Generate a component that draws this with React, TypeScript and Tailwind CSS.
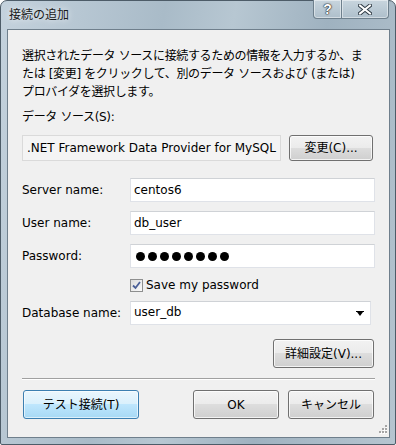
const font = "font-['DejaVu_Sans','Noto_Sans_CJK_JP',sans-serif]";

const btn =
  'flex items-center justify-center rounded-[3px] border border-[#707070] bg-[linear-gradient(#f2f2f2_0%,#ebebeb_50%,#dddddd_50%,#cfcfcf_100%)] shadow-[inset_0_0_0_1px_rgba(255,255,255,0.75)] text-[12px] text-black';

const btnDefault =
  'flex items-center justify-center rounded-[3px] border border-[#3c7fb1] bg-[linear-gradient(#eaf6fd_0%,#d9f0fc_50%,#bee6fd_50%,#a7d9f5_100%)] shadow-[inset_0_0_0_1px_rgba(255,255,255,0.6)] text-[12px] text-black';

const input =
  'flex-1 h-[24px] bg-white border border-[#dfe2e8] border-t-[#cfd2d6] flex items-center pl-[3px] text-[12px]';

function Row({ label, children }: { label: string; children: React.ReactNode }) {
  return (
    <div className="flex items-center">
      <div className="w-[108px] text-[12px] leading-[18px]">{label}</div>
      {children}
    </div>
  );
}

function Grip() {
  return (
    <svg width="10" height="10" viewBox="0 0 10 10" className="absolute right-[2px] bottom-[2px]">
      {[
        [8, 0],
        [8, 3],
        [5, 3],
        [8, 6],
        [5, 6],
        [2, 6],
      ].map(([x, y]) => (
        <g key={`${x}-${y}`}>
          <rect x={x + 1} y={y + 1} width="2" height="2" fill="#ffffff" />
          <rect x={x} y={y} width="2" height="2" fill="#a6a6a6" />
        </g>
      ))}
    </svg>
  );
}

export default function App() {
  return (
    <div className={`${font} w-[396px] h-[445px] flex flex-col rounded-t-[7px] rounded-b-[2px] border border-[#4d5c68] bg-[linear-gradient(100deg,#c4d2dd_0%,#a9bbc8_35%,#b7c7d2_50%,#9fb2c0_70%,#b6c5d0_100%)] text-black`}>
      {/* Title bar */}
      <div className="h-[28px] flex items-start justify-between">
        <div className="pl-[8px] pt-[5px] text-[12px] leading-[18px] text-[#1a1a1a] [text-shadow:0_0_6px_rgba(255,255,255,0.9)]">
          接続の追加
        </div>
        <div className="flex mr-[6px] -mt-px">
          <div className="w-[29px] h-[19px] flex items-center justify-center rounded-bl-[4px] border border-t-0 border-[#6e808d] bg-[linear-gradient(#c8d5de,#aebfcb)] shadow-[inset_0_0_0_1px_rgba(255,255,255,0.45)]">
            <span className="font-['Liberation_Sans',sans-serif] font-bold text-[14px] leading-none text-white [text-shadow:0_0_1px_#222,0_0_1px_#222,0_0_2px_#333]">
              ?
            </span>
          </div>
          <div className="w-[47px] h-[19px] flex items-center justify-center rounded-br-[4px] border border-t-0 border-l-0 border-[#6e808d] bg-[linear-gradient(#c8d5de,#aebfcb)] shadow-[inset_0_0_0_1px_rgba(255,255,255,0.45)]">
            <svg width="14" height="11" viewBox="0 0 14 11">
              <path d="M2 1.5 L12 9.5 M12 1.5 L2 9.5" stroke="#2e3a44" strokeWidth="4" strokeLinecap="square" />
              <path d="M2 1.5 L12 9.5 M12 1.5 L2 9.5" stroke="#ffffff" strokeWidth="2" strokeLinecap="square" />
            </svg>
          </div>
        </div>
      </div>

      {/* Client area */}
      <div className="relative flex-1 ml-[6px] mr-[5px] mb-[6px] border border-[#6f7f8c] bg-[#f0f0f0] px-[14px] pt-[17px] flex flex-col">
        <p className="text-[12px] leading-[18px] whitespace-nowrap tracking-[-0.35px]">
          選択されたデータ ソースに接続するための情報を入力するか、ま
          <br />
          たは [変更] をクリックして、別のデータ ソースおよび (または)
          <br />
          プロバイダを選択します。
        </p>

        <div className="mt-[7px] text-[12px] leading-[18px] tracking-[-0.35px]">データ ソース(S):</div>

        <div className="mt-[9px] flex items-center gap-[8px]">
          <div className="w-[259px] h-[26px] overflow-hidden whitespace-nowrap flex items-center pl-[4px] bg-[#f4f4f4] border border-[#dadada] text-[12px]">
            .NET Framework Data Provider for MySQL
          </div>
          <button className={`${btn} w-[84px] h-[26px]`}>変更(C)...</button>
        </div>

        <div className="mt-[17px] flex flex-col gap-[9px]">
          <Row label="Server name:">
            <div className={input}>centos6</div>
          </Row>
          <Row label="User name:">
            <div className={input}>db_user</div>
          </Row>
          <Row label="Password:">
            <div className={`${input} gap-[3px] pl-[5px]`}>
              {Array.from({ length: 8 }).map((_, i) => (
                <span key={i} className="w-[9px] h-[9px] rounded-full bg-black" />
              ))}
            </div>
          </Row>
        </div>

        <div className="mt-[8px] ml-[108px] flex items-center gap-[3px] h-[18px]">
          <div className="w-[13px] h-[13px] border border-[#8e8f8f] bg-[linear-gradient(135deg,#dcdcdc,#fbfbfb)] flex items-center justify-center">
            <svg width="9" height="9" viewBox="0 0 9 9">
              <path d="M1 4.5 L3.5 7 L8 1" fill="none" stroke="#4a5f97" strokeWidth="1.8" />
            </svg>
          </div>
          <span className="text-[12px] leading-[18px]">Save my password</span>
        </div>

        <div className="mt-[7px] flex items-center">
          <div className="w-[108px] text-[12px] leading-[18px]">Database name:</div>
          <div className="w-[241px] h-[24px] bg-white border border-[#dfe2e8] border-t-[#cfd2d6] flex items-start justify-between pl-[3px] pr-[6px] pt-[1px] text-[12px] leading-[18px]">
            <span>user_db</span>
            <svg width="8" height="6" viewBox="0 0 8 6" className="mt-[8px]">
              <path d="M0 0 H8 V1 H7 L4 5 L1 1 H0 Z" fill="#000" />
            </svg>
          </div>
        </div>

        <div className="mt-[14px] flex justify-end pr-[1px]">
          <button className={`${btn} w-[101px] h-[29px]`}>詳細設定(V)...</button>
        </div>

        <div className="mt-[10px] border-t border-[#a0a0a0] border-b border-b-white" />

        <div className="mt-[10px] flex items-center pl-[1px] pr-[1px]">
          <button className={`${btnDefault} w-[116px] h-[29px]`}>テスト接続(T)</button>
          <div className="flex-1" />
          <div className="flex gap-[9px]">
            <button className={`${btn} w-[86px] h-[29px]`}>OK</button>
            <button className={`${btn} w-[86px] h-[29px]`}>キャンセル</button>
          </div>
        </div>

        <Grip />
      </div>
    </div>
  );
}
